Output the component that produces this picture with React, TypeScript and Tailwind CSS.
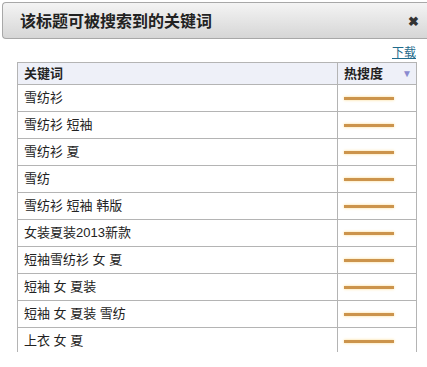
const rows = [
  "雪纺衫",
  "雪纺衫 短袖",
  "雪纺衫 夏",
  "雪纺",
  "雪纺衫 短袖 韩版",
  "女装夏装2013新款",
  "短袖雪纺衫 女 夏",
  "短袖 女 夏装",
  "短袖 女 夏装 雪纺",
  "上衣 女 夏",
];

export default function App() {
  return (
    <div
      className="w-[427px] h-[367px] overflow-hidden bg-white text-[#222]"
      style={{ fontFamily: '"Liberation Sans", "Noto Sans CJK SC", sans-serif' }}
    >
      <div className="ml-[2px] mt-[2px] h-[37px] flex items-center justify-between rounded-l-[4px] border border-r-0 border-[#a8a8a8] bg-gradient-to-b from-[#f4f4f4] to-[#d6d6d6] pl-[17px] pr-[8px] pt-[2px]">
        <span className="text-[16px] font-bold">该标题可被搜索到的关键词</span>
        <span className="text-[13px] font-bold text-[#333]">✖</span>
      </div>

      <div className="flex justify-end pr-[11px] pt-[7px] h-[23px]">
        <a className="text-[12px] leading-[14px] text-[#1f6b8c] underline">下载</a>
      </div>

      <div className="ml-[17px] w-[400px] h-[290px] overflow-hidden border border-b-0 border-[#b4b4b4] text-[13px]">
        <div className="flex h-[22px] bg-[#eef0f8] border-b border-[#b4b4b4] font-bold">
          <div className="w-[320px] pl-[6px] flex items-center border-r border-[#b4b4b4]">关键词</div>
          <div className="flex-1 flex items-center justify-between pl-[6px] pr-[4px]">
            <span>热搜度</span>
            <span className="text-[10px] text-[#8a8ad0]">▼</span>
          </div>
        </div>
        {rows.map((r) => (
          <div key={r} className="flex h-[27px] border-b border-[#b4b4b4]">
            <div className="w-[320px] pl-[6px] flex items-center border-r border-[#b4b4b4]">{r}</div>
            <div className="flex-1 flex items-center pl-[6px]">
              <div className="w-[50px] h-[3px] bg-[#cc944c] shadow-[0_0_3px_#fbd98a]" />
            </div>
          </div>
        ))}
      </div>
    </div>
  );
}
